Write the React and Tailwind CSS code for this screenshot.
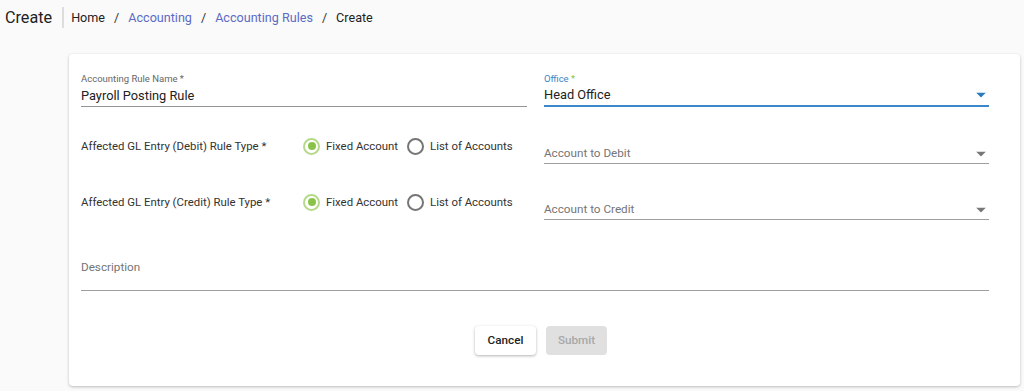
import { useState } from "react";

const Arrow = ({ color }) => (
  <svg width="10" height="5" viewBox="0 0 10 5" className="absolute right-[3px] top-1/2 -translate-y-1/2">
    <path d="M0 0 L10 0 L5 5 Z" fill={color} />
  </svg>
);

const Radio = ({ checked, label, onSelect }) => (
  <label className="flex items-center gap-[6px] cursor-pointer whitespace-nowrap" onClick={onSelect}>
    {checked ? (
      <span className="shrink-0 w-[17px] h-[17px] rounded-full border-2 border-[#b6d98c] flex items-center justify-center">
        <span className="w-[8px] h-[8px] rounded-full bg-[#8bc34a]" />
      </span>
    ) : (
      <span className="shrink-0 w-[17px] h-[17px] rounded-full border-2 border-[#757575]" />
    )}
    <span className="text-[11.4px] text-[#333]">{label}</span>
  </label>
);

const RuleRow = ({ label, placeholder, top }) => {
  const [value, setValue] = useState("fixed");
  return (
    <div className={`flex items-start h-[28px] ${top}`}>
      <div className="shrink-0 w-[222px] h-[19px] leading-[19px] text-[11.4px] text-[#333] whitespace-nowrap">{label}</div>
      <div className="shrink-0 flex items-center gap-[9px] h-[19px] w-[224px]">
        <Radio checked={value === "fixed"} label="Fixed Account" onSelect={() => setValue("fixed")} />
        <Radio checked={value === "list"} label="List of Accounts" onSelect={() => setValue("list")} />
      </div>
      <div className="ml-[17px] flex-1 pt-[7px]">
        <div className="relative h-[19px] leading-[19px] text-[11.7px] text-[#757575] border-b border-[#9e9e9e] box-content">
          {placeholder}
          <Arrow color="#777" />
        </div>
      </div>
    </div>
  );
};

export default function App() {
  return (
    <div className="min-h-[391px] bg-[#fafafa] font-['Roboto',sans-serif] overflow-hidden">
      <div className="flex items-center h-[35px] pl-[5px]">
        <span className="text-[16.2px] text-[#222] leading-[22px]">Create</span>
        <span className="ml-[10px] w-[2px] h-[21px] bg-[#ddd]" />
        <nav className="ml-[7px] flex items-center text-[12.6px] leading-[20px] pt-[1px]">
          <span className="text-[#222]">Home</span>
          <span className="mx-[9px] text-[#333]">/</span>
          <span className="text-[#5c6ac4]">Accounting</span>
          <span className="mx-[9px] text-[#333]">/</span>
          <span className="text-[#5c6ac4]">Accounting Rules</span>
          <span className="mx-[9px] text-[#333]">/</span>
          <span className="text-[#222]">Create</span>
        </nav>
      </div>

      <div className="ml-[69px] mt-[19px] w-[951px] bg-white rounded-[4px] shadow-[0_1px_3px_rgba(0,0,0,0.25)] pt-[18px] pb-[31px] pl-[12px] pr-[31px]">
        <div className="flex">
          <div className="w-[446px]">
            <div className="h-[14px] leading-[14px] text-[9.5px] text-[#666]">Accounting Rule Name *</div>
            <div className="h-[20px] leading-[19px] text-[12.8px] text-[#222] border-b border-[#949494] box-content">
              Payroll Posting Rule
            </div>
          </div>
          <div className="ml-[17px] flex-1">
            <div className="h-[13px] leading-[13px] text-[9.5px] text-[#3a85c8]">
              Office <span className="text-[#8bc34a]">*</span>
            </div>
            <div className="relative h-[20px] leading-[20px] text-[12.8px] text-[#222] border-b-2 border-[#3a87c9] box-content">
              Head Office
              <Arrow color="#2b7bc0" />
            </div>
          </div>
        </div>

        <RuleRow top="mt-[30px]" label="Affected GL Entry (Debit) Rule Type *" placeholder="Account to Debit" />
        <RuleRow top="mt-[28px]" label="Affected GL Entry (Credit) Rule Type *" placeholder="Account to Credit" />

        <div className="mt-[36px] h-[20px] leading-[20px] text-[11.7px] text-[#757575] pb-[13px] border-b border-[#9e9e9e] box-content">
          Description
        </div>

        <div className="flex justify-center gap-[10px] mt-[35px] mr-[-12px]">
          <button className="w-[61px] h-[29px] rounded-[4px] bg-white text-[11.7px] font-medium text-[#222] shadow-[0_1px_3px_rgba(0,0,0,0.3)]">
            Cancel
          </button>
          <button disabled className="w-[61px] h-[29px] rounded-[4px] bg-[#e0e0e0] text-[11.7px] font-medium text-[#a8a8a8]">
            Submit
          </button>
        </div>
      </div>
    </div>
  );
}
